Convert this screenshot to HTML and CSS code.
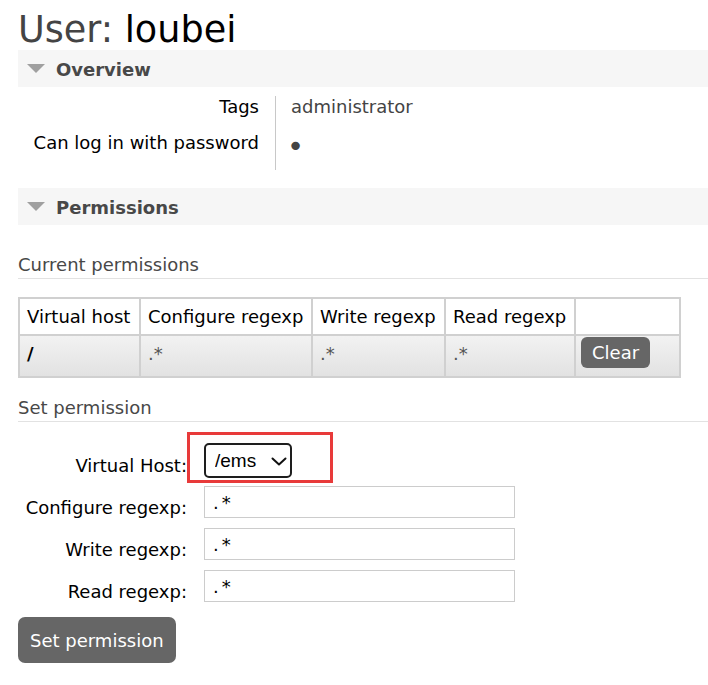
FILE: index.html
```html
<!DOCTYPE html>
<html>
<head>
<meta charset="utf-8">
<title>User: loubei</title>
<link rel="stylesheet" href="styles.css">
</head>
<body>
<div class="main">
  <h1>User: <b>loubei</b></h1>

  <h2 class="bar"><span class="tri"></span>Overview</h2>
  <table class="facts">
    <tr><th>Tags</th><td>administrator</td></tr>
    <tr><th>Can log in with password</th><td><span class="dot">&bull;</span></td></tr>
  </table>

  <h2 class="bar bar-perm"><span class="tri"></span>Permissions</h2>

  <h3 class="sub sub-first">Current permissions</h3>
  <table class="perm">
    <thead>
      <tr>
        <th class="c1">Virtual host</th>
        <th class="c2">Configure regexp</th>
        <th class="c3">Write regexp</th>
        <th class="c4">Read regexp</th>
        <th class="c5"></th>
      </tr>
    </thead>
    <tbody>
      <tr>
        <td class="vh">/</td>
        <td>.*</td>
        <td>.*</td>
        <td>.*</td>
        <td class="act"><button class="btn btn-clear">Clear</button></td>
      </tr>
    </tbody>
  </table>

  <h3 class="sub sub-second">Set permission</h3>
  <form class="form">
    <div class="row row-vh">
      <label class="lbl lbl-vh">Virtual Host:</label>
      <div class="redbox">
        <span class="selwrap">
          <select class="sel"><option>/ems</option></select>
          <svg class="chev" width="16" height="9" viewBox="0 0 16 9"><polyline points="1.5,1.5 8,7.5 14.5,1.5" fill="none" stroke="#111" stroke-width="2" stroke-linecap="round" stroke-linejoin="round"/></svg>
        </span>
      </div>
    </div>
    <div class="row row-in first-in">
      <label class="lbl">Configure regexp:</label>
      <input class="inp" type="text" value=".*">
    </div>
    <div class="row row-in">
      <label class="lbl">Write regexp:</label>
      <input class="inp" type="text" value=".*">
    </div>
    <div class="row row-in">
      <label class="lbl">Read regexp:</label>
      <input class="inp" type="text" value=".*">
    </div>
    <button class="btn btn-set" type="button">Set permission</button>
  </form>
</div>
</body>
</html>
```

FILE: styles.css
```css
html, body {
  margin: 0;
  padding: 0;
  background: #fff;
}
body {
  font-family: "DejaVu Sans", Verdana, sans-serif;
  font-size: 18px;
  line-height: 21px;
  color: #000;
}
.main {
  padding-left: 18px;
}
h1 {
  margin: 0;
  padding-top: 10px;
  height: 40px;
  font-size: 36.6px;
  line-height: 40px;
  font-weight: normal;
  color: #444;
}
h1 b {
  font-weight: normal;
  color: #000;
}
.bar {
  margin: 0;
  height: 37px;
  box-sizing: border-box;
  padding: 1px 0 0 9px;
  display: flex;
  align-items: center;
  background: #f6f6f6;
  font-size: 18px;
  font-weight: bold;
  color: #484848;
}
.tri {
  width: 0;
  height: 0;
  border-left: 9px solid transparent;
  border-right: 9px solid transparent;
  border-top: 9px solid #a0a0a0;
  margin-right: 11px;
  margin-top: -1px;
}
.bar-perm {
  margin-top: 18px;
}
.facts {
  border-collapse: collapse;
  margin-top: 9px;
}
.facts th {
  width: 241px;
  text-align: right;
  font-weight: normal;
  vertical-align: top;
  padding: 0 16px 15px 0;
  border-right: 1px solid #c8c8c8;
}
.facts td {
  vertical-align: top;
  padding: 0 0 15px 15px;
  color: #444;
}
.facts tr:last-child th,
.facts tr:last-child td {
  padding-bottom: 17px;
}
.dot {
  font-size: 29px;
  line-height: 0;
  vertical-align: -7px;
  margin-left: -4px;
  color: #444;
}
.sub {
  margin: 0;
  font-size: 18px;
  line-height: 21px;
  font-weight: normal;
  color: #484848;
  padding-bottom: 3px;
  border-bottom: 1px solid #e2e2e2;
}
.sub-first {
  margin-top: 29px;
}
.sub-second {
  margin-top: 19px;
}
.perm {
  border-collapse: collapse;
  margin-top: 18px;
}
.perm th,
.perm td {
  border: 2px solid #d0d0d0;
  padding: 7px;
  text-align: left;
  vertical-align: top;
}
.perm th {
  font-weight: normal;
  color: #000;
  background: #fff;
}
.perm .c1 { width: 105px; }
.perm .c2 { width: 156px; }
.perm .c3 { width: 117px; }
.perm .c4 { width: 114px; }
.perm .c5 { width: 89px; }
.perm tbody td {
  background: linear-gradient(#f2f2f2, #e2e2e2);
  color: #555;
}
.perm td.vh {
  font-weight: bold;
  color: #000;
}
.perm td.act {
  padding: 1px 5px 8px 5px;
}
.btn {
  border: none;
  background: #666;
  color: #fff;
  font-family: "DejaVu Sans", Verdana, sans-serif;
  font-size: 18px;
  cursor: pointer;
}
.btn-clear {
  display: block;
  height: 31px;
  padding: 0 11px;
  line-height: 31px;
  border-radius: 6px;
}
.form {
  margin: 10px 0 0;
}
.row {
  display: flex;
  align-items: flex-end;
}
.lbl {
  width: 169px;
  text-align: right;
  color: #000;
}
.lbl-vh {
  padding-bottom: 7px;
}
.redbox {
  width: 146px;
  height: 51px;
  box-sizing: border-box;
  border: 3px solid #e83a3a;
  padding: 8px 0 0 14px;
}
.selwrap {
  position: relative;
  display: inline-block;
}
.sel {
  -webkit-appearance: none;
  appearance: none;
  display: block;
  width: 88px;
  height: 35px;
  box-sizing: border-box;
  border: 2px solid #1e1e1e;
  border-radius: 5px;
  background: #fff;
  padding: 0 0 0 9px;
  margin: 0;
  font-family: "Liberation Sans", Arial, sans-serif;
  font-size: 19px;
  color: #000;
}
.chev {
  position: absolute;
  left: 67px;
  top: 14px;
}
.row-in {
  margin-top: 10px;
}
.first-in {
  margin-top: 3px;
}
.inp {
  margin: 0 0 0 17px;
  width: 311px;
  height: 32px;
  box-sizing: border-box;
  border: 1px solid #cccccc;
  padding: 0 8px;
  font-family: "DejaVu Sans", Verdana, sans-serif;
  font-size: 18px;
  letter-spacing: 3px;
  color: #000;
  background: #fff;
}
.btn-set {
  margin-top: 15px;
  height: 46px;
  padding: 0 12px;
  border-radius: 7px;
}
```
